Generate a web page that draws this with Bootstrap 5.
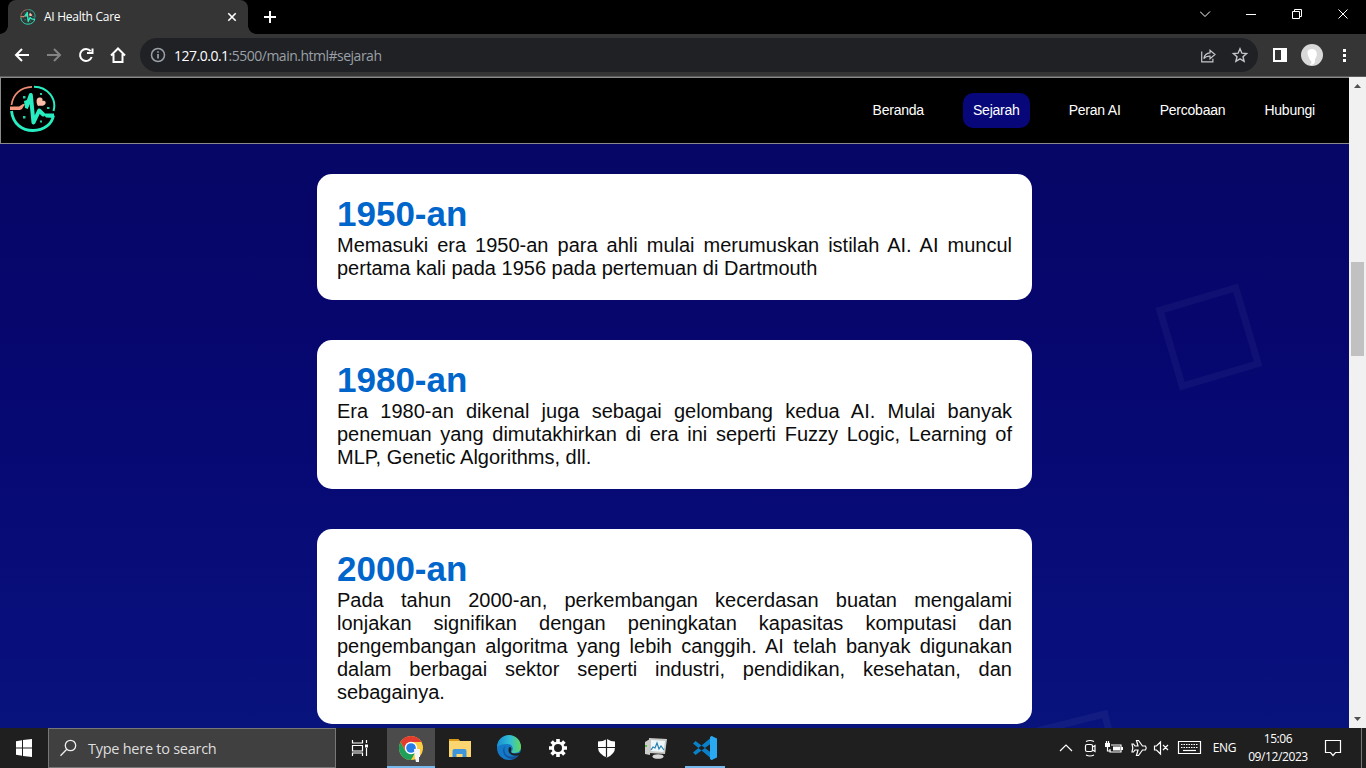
<!DOCTYPE html>
<html lang="id">
<head>
<meta charset="utf-8">
<meta name="viewport" content="width=device-width, initial-scale=1">
<title>AI Health Care</title>
<link href="https://cdn.jsdelivr.net/npm/bootstrap@5.3.0/dist/css/bootstrap.min.css" rel="stylesheet">
<style>
html,body{height:768px;overflow:hidden}
body{font-family:"Liberation Sans",Arial,sans-serif;background:#000;color:#000}
svg{display:block;flex:none}
.ui-font{font-family:"Open Sans","Noto Sans",sans-serif}
.strip{height:34px;background:#000}
.tab-item{width:240px;height:34px;margin-left:8px;background:#353535;border-radius:8px 8px 0 0;font-size:12px;color:#fff;padding-left:12px;padding-right:10px}
.tab-item::before,.tab-item::after{content:"";position:absolute;bottom:0;width:8px;height:8px}
.tab-item::before{left:-8px;background:radial-gradient(circle at 0 0,#000 7.5px,#353535 8px)}
.tab-item::after{right:-8px;background:radial-gradient(circle at 100% 0,#000 7.5px,#353535 8px)}
.tab-title{letter-spacing:-.26px;margin-left:8px}
.toolbar{height:43px;background:#353535;border-bottom:1px solid #5c5c5c;padding:4px 14px 4px 14px}
.omnibox{width:1118px;height:34px;border-radius:17px;background:#202125;margin-left:14px;padding:0 9px 0 10px;font-size:14px;color:#9aa0a6}
.url-text{letter-spacing:-.5px;margin-left:8px}
.url-text b{font-weight:400;color:#fff}
.page-area{height:651px}
.page-body{width:1349px;background:linear-gradient(#060663 0,#06066e 40%,#080f7c 88%,#08137c 100%)}
.top-nav{height:67px;background:#000;border:1px solid #8a8a8a;border-right:0;padding:0 34px 0 9px}
.menu-links{gap:39px;font-size:14px;letter-spacing:-.22px;line-height:15px;color:#fff}
.menu-links a{color:#fff;text-decoration:none}
.menu-links a.current{background:#07077a;border-radius:10px;padding:10px}
.era-list{width:715px;margin:30px auto 0;gap:40px}
.era{background:#fff;border-radius:15px;padding:20px;font-size:20px;line-height:23px;text-align:justify;color:#0c0c0c}
.era h2{font-size:35px;line-height:40px;font-weight:700;color:#06c;margin:0;text-align:left}
.era p{margin:0}
.shape{border:7px solid rgba(255,255,255,.045);width:86px;height:86px;position:absolute}
.shape-a{left:1166px;top:217px;transform:rotate(-16.5deg)}
.shape-b{left:1033px;top:642px;transform:rotate(-14deg)}
.scroller{width:17px;background:#f1f1f1}
.thumb{width:13px;height:94px;background:#c1c1c1;margin-top:168px}
.taskbar{height:40px;background:#1f1f1f;color:#fff}
.task-search{width:288px;height:40px;background:#404040;border:1px solid #777;color:#dedede;font-size:14.5px;padding-left:11px}
.task-search span{margin-left:11px;letter-spacing:-.26px;padding-top:1px}
.app{width:48px;height:40px;margin-right:1px}
.app.running{background:#4b4b4b;border-bottom:2px solid #76b9ed}
.tray{font-size:12px;letter-spacing:-.4px}
.clock{width:62px;line-height:18px;margin-left:11px}
</style>
</head>
<body>
<svg width="0" height="0" class="position-absolute"><defs>
<symbol id="logo" viewBox="0 0 46 48"><g fill="none">
<path d="M1.500 20C3 9 11 2.200 22 1.800" stroke="#ef8d73" stroke-width="1.700"/>
<path d="M24 1.800C38 2 47 14 43.500 26" stroke="#28edc0" stroke-width="2"/>
<path d="M1.500 26C3 39 12 45.500 23 45.500C34 45.500 42 39 43.500 30.500" stroke="#28edc0" stroke-width="2.800"/>
<path d="M17 20.500l3.800-10.500 2.700 27.500 5.700-12 4 4" stroke="#28edc0" stroke-width="4" stroke-linejoin="round" stroke-linecap="round"/></g>
<path d="M0 21.500h9l4-2.500h2l-3 5-2 1H0z" fill="#f59a80"/>
<path d="M28 21c-2-3-2-8 1-8.500 3-.5 4 1 3.500 3.500 3-1 4 2 2.500 3.500-2 2-5 1-7 1.500z" fill="#fbbda5"/>
<path d="M14 16l3-1 2 4-1 5-3-1zM33 28.500h11v4.500l-8-.5z" fill="#28edc0"/>
<path d="M13 11h2.500v2.500H13zM13 31h2.500v2.500H13zM30 8h2v2h-2zM37 22h2.500v2H37zM30 35.500h2v2h-2z" fill="#25cda9"/></symbol>
</defs></svg>
<div class="d-flex flex-column">
<div class="strip ui-font d-flex align-items-center">
 <div class="tab-item position-relative d-flex align-items-center">
  <svg width="16" height="16"><use href="#logo"/></svg><span class="tab-title">AI Health Care</span>
  <svg class="ms-auto" width="12" height="12" viewBox="0 0 12 12" stroke="#fff" stroke-width="1.600"><path d="M2.300 2.300l7.400 7.400M9.700 2.300L2.300 9.700"/></svg>
 </div>
 <svg width="12" height="12" viewBox="0 0 12 12" class="ms-3" stroke="#fff" stroke-width="2"><path d="M6 0v12M0 6h12"/></svg>
 <svg class="ms-auto" width="166" height="34" viewBox="1200 0 166 34" fill="none" stroke="#fff"><path d="M1200 11.500l5 5 5-5M1246 14.500h10M1292.500 11.500h7v7h-7zM1294.500 11.500v-2h7v7h-2M1338.500 9.500l9 9M1347.500 9.500l-9 9"/></svg>
</div>
<div class="toolbar ui-font d-flex align-items-center">
 <svg width="112" height="34" viewBox="14 38 112 34" fill="none" stroke="#fff" stroke-width="2"><path d="M29 55H16M22 49l-6 6 6 6"/><path stroke="#838383" d="M47 55h13M54 49l6 6-6 6"/><path d="M90.700 51.200A6 6 0 1 0 91.700 57M92.500 48.500v4.500h-5.500" /><path d="M111 55.500l7-7 7 7M113.500 54v8h9v-8"/></svg>
 <div class="omnibox d-flex align-items-center">
  <svg width="16" height="16" viewBox="0 0 16 16" fill="none" stroke="#9aa0a6" stroke-width="1.500"><circle cx="8" cy="8" r="6.500"/><path d="M8 7v4.500M8 4.200v1.600" stroke-width="1.700"/></svg>
  <span class="url-text"><b>127.0.0.1</b>:5500/main.html#sejarah</span>
  <svg class="ms-auto" width="50" height="20" viewBox="1199 45 50 20" fill="none" stroke="#c4c7cb" stroke-width="1.400"><path d="M1201.700 51.500v10.300h11.200v-3M1203.800 58.500q1-5.500 6.200-5.700v-2.600l5 4.300-5 4.300v-2.700q-4-.3-6.200 2.400z" stroke-width="1.200"/><path d="M1240 48.800l1.900 4.400 4.700.4-3.600 3.100 1.100 4.600-4.100-2.500-4.100 2.500 1.100-4.600-3.600-3.100 4.700-.4z"/></svg>
 </div>
 <svg width="94" height="34" viewBox="1258 38 94 34" class="ms-auto"><path d="M1274 49h12v12h-12z" fill="none" stroke="#fff" stroke-width="2"/><path d="M1281 48h6v14h-6z" fill="#fff"/><circle cx="1312" cy="55" r="11" fill="#d9d9d9"/><path d="M1312 49c7 0 5 9 3 10v3q-1 3-5 3 3-3 0-5-6-11 2-11z" fill="#fff"/><g fill="#fff"><path d="M1343 49h3v3h-3zM1343 54h3v3h-3zM1343 59h3v3h-3z"/></g></svg>
</div>
<div class="page-area d-flex overflow-hidden">
 <main class="page-body position-relative overflow-hidden">
  <nav class="top-nav d-flex align-items-center justify-content-between">
   <svg width="46" height="48" class="mb-1"><use href="#logo"/></svg>
   <div class="menu-links d-flex align-items-center"><a href="#beranda">Beranda</a><a class="current" href="#sejarah">Sejarah</a><a href="#peran">Peran AI</a><a href="#percobaan">Percobaan</a><a href="#hubungi">Hubungi</a></div>
  </nav>
  <div class="shape shape-a"></div><div class="shape shape-b"></div>
  <div class="era-list d-flex flex-column position-relative">
   <article class="era"><h2>1950-an</h2><p>Memasuki era 1950-an para ahli mulai merumuskan istilah AI. AI muncul pertama kali pada 1956 pada pertemuan di Dartmouth</p></article>
   <article class="era"><h2>1980-an</h2><p>Era 1980-an dikenal juga sebagai gelombang kedua AI. Mulai banyak penemuan yang dimutakhirkan di era ini seperti Fuzzy Logic, Learning of MLP, Genetic Algorithms, dll.</p></article>
   <article class="era"><h2>2000-an</h2><p>Pada tahun 2000-an, perkembangan kecerdasan buatan mengalami lonjakan signifikan dengan peningkatan kapasitas komputasi dan pengembangan algoritma yang lebih canggih. AI telah banyak digunakan dalam berbagai sektor seperti industri, pendidikan, kesehatan, dan sebagainya.</p></article>
  </div>
 </main>
 <div class="scroller d-flex flex-column align-items-center justify-content-between">
  <svg width="17" height="17"><path d="M5 11l3.500-4 3.500 4z" fill="#505050"/></svg><div class="thumb mb-auto"></div><svg width="17" height="17"><path d="M5 6l3.500 4L12 6z" fill="#505050"/></svg>
 </div>
</div>
<footer class="taskbar ui-font d-flex align-items-center">
 <svg width="48" height="40" fill="#fff"><path d="M16 13.200l6-.9v7.200h-6zM23 12.100l9-1.200v8.600h-9zM16 20.500h6v7.200l-6-.9zM23 20.500h9v8.600l-9-1.200z"/></svg>
 <div class="task-search d-flex align-items-center"><svg width="17" height="18" viewBox="0 0 17 18" fill="none" stroke="#eee" stroke-width="1.300"><circle cx="10.500" cy="6.500" r="5.200"/><path d="M6.800 10.200L.5 16.700"/></svg><span>Type here to search</span></div>
 <svg width="51" height="40" viewBox="336 728 51 40" fill="none" stroke="#fff" stroke-width="1.200"><path d="M352.500 740v3h10v-3M352.500 756v-3h10v3M352.500 745.500h10v5.500h-10zM366.500 740v3M366.500 748v8"/><path d="M365 744.500h3v3h-3z" fill="#fff" stroke="none"/></svg>
 <div class="app running"><svg width="48" height="40" viewBox="387 728 48 40"><circle cx="411" cy="748" r="12" fill="#ffcd40"/><path d="M400.600 742A12 12 0 0 1 421.400 742H411z" fill="#e33b2e"/><path d="M400.600 742A12 12 0 0 0 411 760l5-9-10.500.2z" fill="#1da05a"/><path d="M400.600 742l5 9 5-9z" fill="#e33b2e"/><circle cx="411" cy="748" r="6.200" fill="#fff"/><circle cx="411" cy="748" r="4.800" fill="#287de8"/><path d="M414 749h6v8h-1v5h-3l-1-4z" fill="#f5f5f5"/></svg></div>
 <div class="app"><svg width="48" height="40" viewBox="436 728 48 40"><path d="M449 739h9l2 2h11v16h-22z" fill="#fbd56f"/><path d="M449 739h9l1.500 2H449z" fill="#d99b16"/><path d="M452.500 757v-6q0-2 2-2h10q2 0 2 2v6h-4v-3h-6v3z" fill="#3d96db"/></svg></div>
 <div class="app"><svg width="48" height="40" viewBox="485 728 48 40"><defs><linearGradient id="eg" x1="0" x2="1"><stop offset="0" stop-color="#168ed5"/><stop offset=".55" stop-color="#32bfd5"/><stop offset="1" stop-color="#62d75c"/></linearGradient></defs><circle cx="509" cy="748" r="12" fill="#1479c6"/><path d="M497 747A12 12 0 0 1 521 747c0 5-4 6-8 6-3 0-2-1-1-2 2-3 0-7-5-7-4 0-8 1-10 3z" fill="url(#eg)"/><path d="M505 746c-3 9 5 14 14 8l-5 5c-8 1-14-7-9-13z" fill="#15529c"/><path d="M510 747c2 0 1 4 1 5 2 2 6 2 10 0l-1.500 3c-6 2-11-1-11-5 0-2 .5-3 1.500-3z" fill="#1f1f1f"/></svg></div>
 <div class="app"><svg width="48" height="40" viewBox="534 728 48 40"><g transform="translate(558 748)"><g stroke="#fff" stroke-width="3.600"><path d="M0-9V9M-9 0H9M-6.400-6.400L6.400 6.400M6.400-6.400L-6.400 6.400"/></g><circle r="6.500" fill="#fff"/><circle r="4" fill="#1f1f1f"/></g></svg></div>
 <div class="app"><svg width="48" height="40" viewBox="583 728 48 40"><path d="M607 739q4 2.500 8 2.500v6q0 6.500-8 10-9-3.500-9-10v-6q5 0 9-2.500z" fill="#fff"/><path d="M606.500 739v18M598 747.500h17" stroke="#1f1f1f" stroke-width="1.200"/></svg></div>
 <div class="app"><svg width="48" height="40" viewBox="632 728 48 40"><path d="M645 742l5-3v16l-5-1z" fill="#ccc"/><path d="M649 738l18 1-2 15-16-1z" fill="#c9c9c6"/><path d="M651 740l14 1-1.500 11-12.500-1z" fill="#edf7fb"/><path d="M651 750l2-3 2 1 2-5 2 6 2-3 3 4" fill="none" stroke="#257fae" stroke-width="1.200"/><ellipse cx="658" cy="756.500" rx="5.500" ry="2.300" fill="#d8d8d8"/><path d="M645 745h2v2h-2z" fill="#52c832"/></svg></div>
 <div class="app"><svg width="48" height="40" viewBox="681 728 48 40"><path d="M693 743.500l2.500-2.500 17.500 13v6zM693 752.500l2.500 2.500 17.500-13v-6z" fill="#0a80c8"/><path d="M711.500 736l5.500 2.500v19l-5.500 2.500-1.500-1v-22z" fill="#2aa8f2"/><path d="M685 766h40v2h-40z" fill="#76b9ed"/></svg></div>
 <div class="tray ms-auto d-flex align-items-center">
  <svg width="148" height="40" viewBox="1058 728 148 40" fill="none" stroke="#fff" stroke-width="1.200"><path d="M1061 751l6-6 6 6"/><rect x="1086.500" y="744.500" width="7" height="7" rx="1.500"/><path d="M1093.500 747l2.500-1.500v6l-2.500-1.500M1087 741.500q4-2 8 0M1087 755q4 2 8 0"/><path d="M1112 745h10v7h-11v-3" /><path d="M1114 746.500h7v4h-7zM1106 743h5v4h-5zM1122 747h2v3h-2z" fill="#fff" stroke="none"/><path d="M1107.500 741v3M1109.500 741v3M1108.500 747v4h3"/><path d="M1137.500 740.500h2l4 5.500h3q1.500 2 0 4h-3l-4 5.500h-2l1.500-5.500h-3l-1.500 2h-1.500l.8-4-.8-4h1.500l1.500 2h3z"/><path d="M1155.500 746h2l4-4v12l-4-4h-2zM1164 745l5 5M1169 745l-5 5M1179.500 741.500h22v12h-22z"/><path d="M1182 744.500h17M1182 747.500h17" stroke-dasharray="1.500 1"/><path d="M1184 750.500h13"/></svg>
  <span class="ps-2">ENG</span>
  <div class="clock text-center">15:06<br>09/12/2023</div>
  <svg width="57" height="40" viewBox="1309 728 57 40" fill="none" stroke="#fff" stroke-width="1.200"><path d="M1325.500 740.500h15v12h-5l-2.500 3-2.500-3h-5z"/><path d="M1361.500 728v40" stroke="#777" stroke-width="1"/></svg>
 </div>
</footer>
</div>
<script src="https://cdn.jsdelivr.net/npm/bootstrap@5.3.0/dist/js/bootstrap.bundle.min.js"></script>
</body>
</html>
